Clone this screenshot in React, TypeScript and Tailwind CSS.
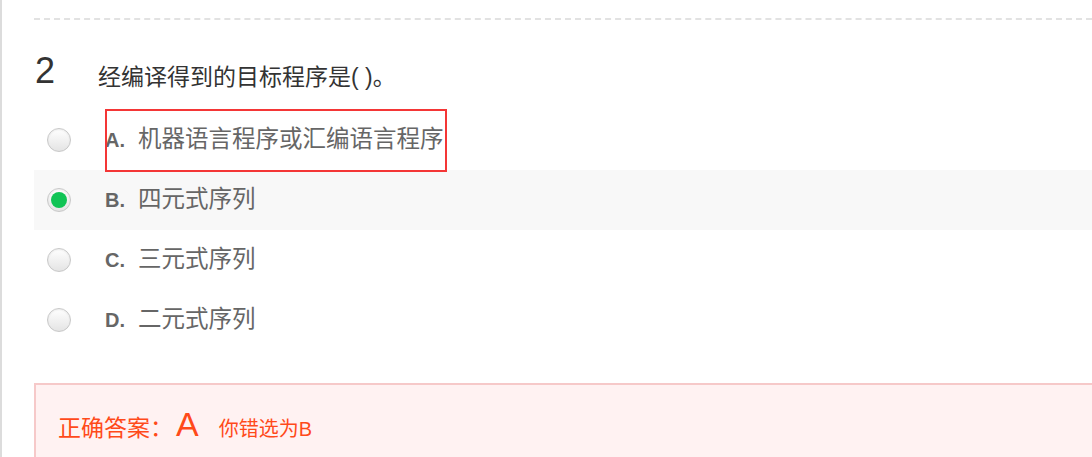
const options = [
  { key: "A", text: "机器语言程序或汇编语言程序" },
  { key: "B", text: "四元式序列" },
  { key: "C", text: "三元式序列" },
  { key: "D", text: "二元式序列" },
];

const Radio = ({ checked }: { checked: boolean }) => {
  return (
    <span className="flex h-[24px] w-[24px] items-center justify-center rounded-full border border-[#c8c8c8] bg-gradient-to-b from-[#ffffff] to-[#e4e4e4] shadow-[inset_0_1px_2px_rgba(0,0,0,0.08)]">
      {checked && <span className="h-[16px] w-[16px] rounded-full bg-[#10c455]"></span>}
    </span>
  );
};

const App = () => {
  const selected = "B";
  return (
    <div
      className="h-[457px] w-[1092px] overflow-hidden bg-white border-l-2 border-[#dcdcdc]"
      style={{ fontFamily: '"Liberation Sans", "Noto Sans CJK SC", sans-serif' }}
    >
      <div className="ml-[32px] pt-[18px]">
        <div className="border-t-2 border-dashed border-[#e2e2e2]"></div>

        <div className="flex items-end h-[70px] pb-[1px]">
          <span className="w-[64px] pl-[1px] text-[36px] leading-none text-[#333]">2</span>
          <span className="text-[23px] leading-none text-[#333]">经编译得到的目标程序是(&nbsp;)。</span>
        </div>

        <div className="mt-[20px] flex flex-col">
          {options.map((o) => (
            <div
              key={o.key}
              className={`relative flex h-[60px] items-center pl-[13px] ${o.key === selected ? "bg-[#f8f8f8]" : ""}`}
            >
              <Radio checked={o.key === selected} />
              <span className="ml-[34px] w-[33px] text-[20px] font-bold text-[#666]">{o.key}.</span>
              <span className="text-[23.5px] text-[#666]">{o.text}</span>
              {o.key === "A" && (
                <span className="absolute z-10 left-[71px] top-[-1px] h-[63px] w-[342px] border-2 border-[#f43636]"></span>
              )}
            </div>
          ))}
        </div>

        <div className="mt-[33px] h-[100px] border-t-2 border-l-2 border-[#f6c9c9] bg-[#fff2f2] pl-[22px] pt-[14px]">
          <div className="flex items-baseline text-[#ff4a1a]">
            <span className="text-[23px]">正确答案：</span>
            <span className="ml-[3px] text-[34px]">A</span>
            <span className="ml-[20px] text-[20px]">你错选为B</span>
          </div>
        </div>
      </div>
    </div>
  );
};

export default App;
